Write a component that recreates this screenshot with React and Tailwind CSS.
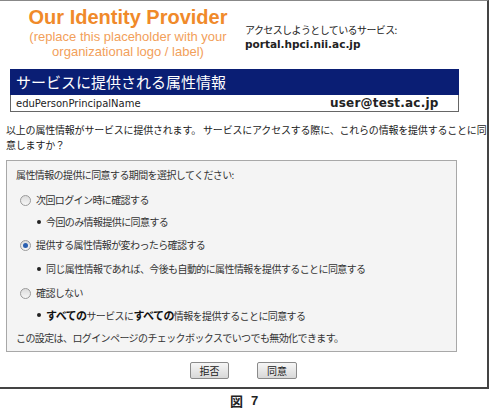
import React from "react";

const jp = { fontFamily: '"Noto Sans CJK JP", "Noto Sans", sans-serif' };
const verdana = { fontFamily: '"DejaVu Sans", Verdana, sans-serif' };
const arial = { fontFamily: '"Liberation Sans", Arial, sans-serif' };

function Radio({ checked }) {
  return (
    <span className="w-[11px] h-[11px] rounded-full border border-[#9a9a9a] bg-gradient-to-b from-[#dcdcdc] to-[#f6f6f6] flex items-center justify-center shrink-0">
      {checked && <span className="w-[5px] h-[5px] rounded-full bg-[#2a5fb0]" />}
    </span>
  );
}

function Bullet({ children }) {
  return (
    <div className="flex items-center h-[14px] pl-[21px]">
      <span className="w-[4px] h-[4px] rounded-full bg-[#222] mr-[5px]" />
      <span>{children}</span>
    </div>
  );
}

export default function App() {
  return (
    <div className="w-[498px] h-[409px] bg-white overflow-hidden text-[#222]" style={jp}>
      <div className="w-[489px] h-[389px] border-t border-t-[#888] border-r-2 border-r-[#444] border-b-2 border-b-[#444]">
        <div className="flex">
          <div className="w-[256px] flex flex-col items-center pt-[4px]" style={arial}>
            <div className="text-[20px] leading-[24px] font-bold text-[#f08a2a]">Our Identity Provider</div>
            <div className="text-[13px] leading-[15px] text-[#f2a05a] text-center">
              (replace this placeholder with your
              <br />
              organizational logo / label)
            </div>
          </div>
          <div className="ml-[-11px] mt-[22px] text-[10px] leading-[14px]">
            <div className="tracking-[-0.6px]">アクセスしようとしているサービス:</div>
            <div className="font-bold text-[10.5px]" style={verdana}>portal.hpci.nii.ac.jp</div>
          </div>
        </div>

        <div className="ml-[10px] w-[449px] mt-[10px]">
          <div className="h-[26px] bg-[#0a1e74] text-white text-[15px] leading-[26px] pl-[6px]">
            サービスに提供される属性情報
          </div>
          <div className="h-[17px] bg-white border-l border-r border-b border-[#666] flex items-center text-[10px]" style={verdana}>
            <span className="pl-[5px] w-[319px]">eduPersonPrincipalName</span>
            <span className="font-bold text-[12px] tracking-[0.2px]">user@test.ac.jp</span>
          </div>
        </div>

        <p className="ml-[6px] mt-[10px] text-[10px] leading-[15px] tracking-[-0.2px]">
          以上の属性情報がサービスに提供されます。 サービスにアクセスする際に、これらの情報を提供することに同
          <br />
          意しますか？
        </p>

        <div className="ml-[6px] mt-[8px] w-[451px] h-[192px] bg-[#f4f4f4] border border-[#a8a8a8] pl-[9px] pt-[7px] text-[10px] leading-[14px] tracking-[-0.6px] text-[#333]">
          <div className="h-[14px]">属性情報の提供に同意する期間を選択してください:</div>
          <div className="flex items-center gap-[5px] h-[14px] mt-[11px] pl-[4px]">
            <Radio />
            <span>次回ログイン時に確認する</span>
          </div>
          <div className="mt-[8px]">
            <Bullet>今回のみ情報提供に同意する</Bullet>
          </div>
          <div className="flex items-center gap-[5px] h-[14px] mt-[9px] pl-[4px]">
            <Radio checked />
            <span>提供する属性情報が変わったら確認する</span>
          </div>
          <div className="mt-[10px]">
            <Bullet>同じ属性情報であれば、今後も自動的に属性情報を提供することに同意する</Bullet>
          </div>
          <div className="flex items-center gap-[5px] h-[14px] mt-[10px] pl-[4px]">
            <Radio />
            <span>確認しない</span>
          </div>
          <div className="mt-[8px]">
            <Bullet>
              <b className="text-[11px] text-[#111]">すべての</b>サービスに<b className="text-[11px] text-[#111]">すべての</b>情報を提供することに同意する
            </Bullet>
          </div>
          <div className="h-[14px] mt-[9px]">この設定は、ログインページのチェックボックスでいつでも無効化できます。</div>
        </div>

        <div className="flex justify-center gap-[28px] mt-[10px]">
          <button className="w-[39px] h-[17px] rounded-[2px] border border-[#8a8a8a] bg-gradient-to-b from-[#f6f6f6] to-[#d8d8d8] text-[10px] leading-[15px] text-[#222]">
            拒否
          </button>
          <button className="w-[40px] h-[17px] rounded-[2px] border border-[#8a8a8a] bg-gradient-to-b from-[#f6f6f6] to-[#d8d8d8] text-[10px] leading-[15px] text-[#222]">
            同意
          </button>
        </div>
      </div>

      <div className="flex justify-center mt-[4px] ml-[-10px] text-[13px] leading-[16px] font-bold text-[#222] gap-[8px]">
        <span>図</span>
        <span style={arial}>7</span>
      </div>
    </div>
  );
}
